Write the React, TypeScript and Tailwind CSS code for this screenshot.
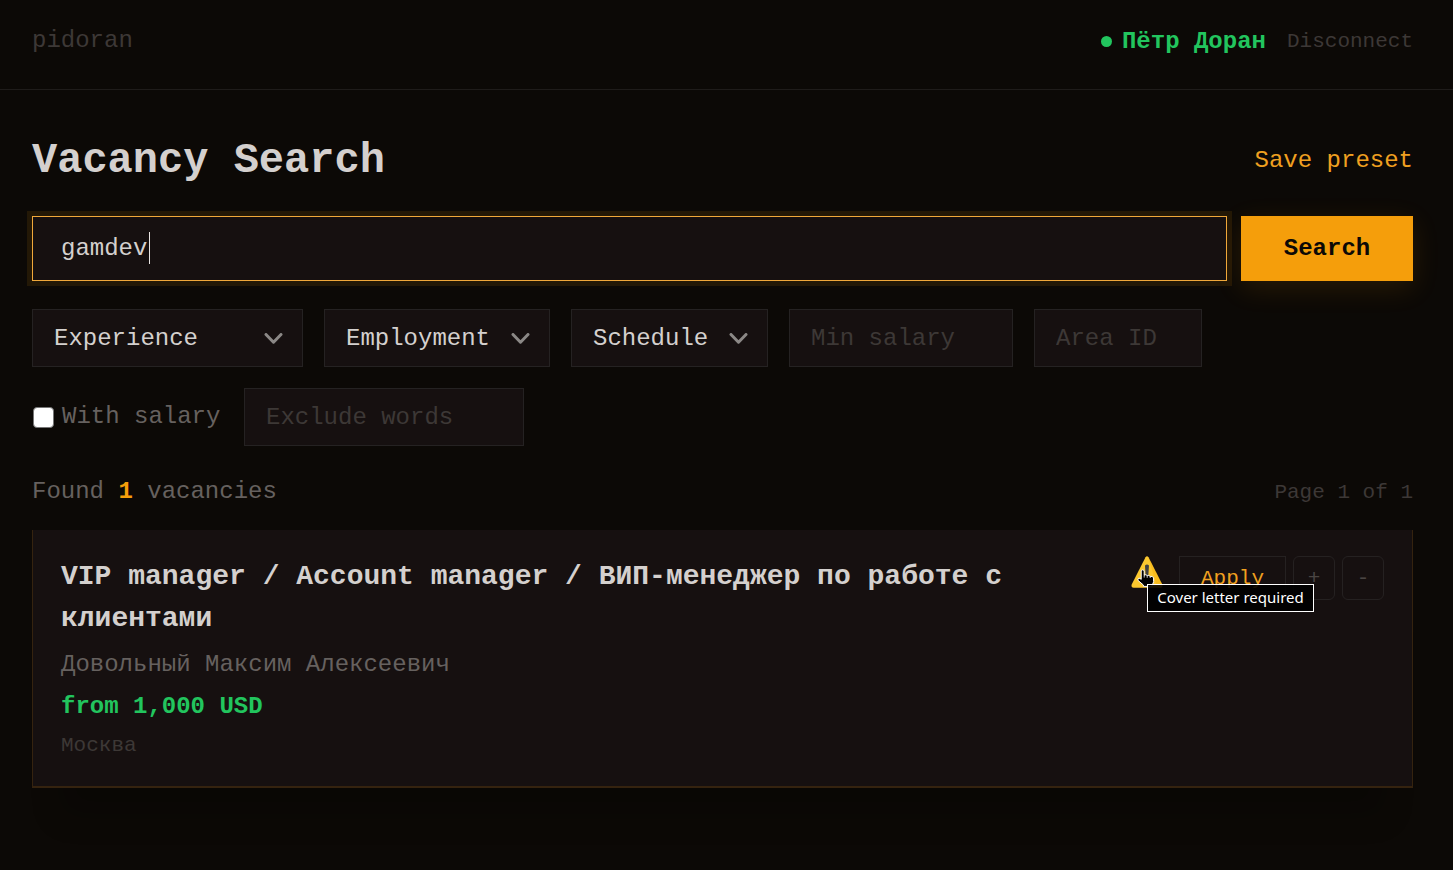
import { useState } from "react";
import type { ReactNode } from "react";

const vacancies = [
  {
    id: 1,
    title: "VIP manager / Account manager / ВИП-менеджер по работе с клиентами",
    employer: "Довольный Максим Алексеевич",
    salary: "from 1,000 USD",
    city: "Москва",
    letterRequired: true,
  },
];

const fieldClass =
  "h-[58px] border border-[#252222] bg-[#161010] px-[21px] text-2xl text-[#d4d0ce] outline-none placeholder:text-[#3d3836]";

const FilterSelect = ({ label, className }: { label: string; className: string }) => (
  <div className={`relative ${className}`}>
    <select aria-label={label} className={`${fieldClass} w-full appearance-none pt-0.5`}>
      <option>{label}</option>
    </select>
    <svg
      className="pointer-events-none absolute top-6 right-5 h-[11px] w-[19px]"
      viewBox="0 0 19 11"
      fill="none"
      stroke="#8b8886"
      strokeWidth="3"
      strokeLinecap="round"
      strokeLinejoin="round"
    >
      <path d="M2 1.5 9.5 9.2 17 1.5" />
    </svg>
  </div>
);

const WarningIcon = () => (
  <svg className="h-8 w-8" viewBox="0 0 32 32">
    <path
      d="M14.5 1.2Q16 -.8 17.5 1.2L31.3 28.6Q32.2 31.6 29.4 31.8H2.6Q-.2 31.6.7 28.6Z"
      fill="#fcc82f"
    />
    <path d="M17.5 1.2 31.3 28.6Q32.2 31.6 29.4 31.8H26Z" fill="#f2a600" opacity=".35" />
    <path d="M14 9.5Q16 7.5 18 9.5L17.3 20.5Q16 22 14.7 20.5Z" fill="#424242" />
    <circle cx="16" cy="25.8" r="2.2" fill="#424242" />
  </svg>
);

const HandCursor = () => (
  <svg className="absolute top-[13px] left-1.5 h-[18px] w-[18px]" viewBox="0 0 18 18">
    <path
      d="M4.2 1.6Q5.7 0 7.2 1.6V6.2Q9 5 10.2 6.6 12 5.8 13.2 7.4 15.8 6.8 16.6 9V12.6Q16.4 14.4 15 15.6V17.4H6.4V16Q3.8 13.8 1.2 11.6 .4 9.8 1.8 9.2 3 9 4.2 10.4Z"
      fill="#000"
      stroke="#fff"
      strokeLinejoin="round"
    />
    <path d="M7.2 6.2V8.6M10.2 6.8V8.8M13.2 7.4V9" stroke="#fff" strokeWidth=".8" fill="none" />
  </svg>
);

const RoundButton = ({ label, children }: { label: string; children: ReactNode }) => (
  <button
    aria-label={label}
    className="h-11 w-[42px] rounded-md border border-[#252121] pt-0.5 text-[21px] text-[#4a4543]"
  >
    {children}
  </button>
);

const App = () => {
  const [query, setQuery] = useState("gamdev");

  return (
    <div className="min-h-screen bg-[#0c0906] font-['Liberation_Mono',monospace] text-2xl text-[#d4d0ce]">
      <header className="flex items-baseline justify-between border-b border-[#1f1c1a] pt-[23px] pr-10 pb-[29px] pl-8 leading-9">
        <a href="#" className="text-[#3d3836]">
          pidoran
        </a>
        <div className="flex items-baseline gap-[21px]">
          <span className="flex items-center gap-[10px] font-bold text-[#22c55e]">
            <span className="h-[11px] w-[11px] rounded-full bg-[#22c55e]" />
            Пётр Доран
          </span>
          <button className="text-[21px] text-[#3d3836]">Disconnect</button>
        </div>
      </header>

      <main className="pt-[42px] pr-10 pb-20 pl-8">
        <div className="mb-[26px] flex items-center justify-between">
          <h1 className="text-[42px] leading-[58px] font-bold">Vacancy Search</h1>
          <button className="text-[#f0a020]">Save preset</button>
        </div>

        <form className="flex gap-[14px]" onSubmit={(e) => e.preventDefault()}>
          <div className="relative flex-1">
            <input
              aria-label="Search vacancies"
              value={query}
              onChange={(e) => setQuery(e.target.value)}
              className="block h-[65px] w-full border border-[#f0a83a] bg-[#161010] px-7 caret-transparent shadow-[0_0_0_5px_rgba(245,158,11,0.1)] outline-none"
            />
            <span className="pointer-events-none absolute top-4 left-[117px] h-8 w-px bg-[#e8e4e2]" />
          </div>
          <button className="h-[65px] w-[172px] bg-[#f59e0b] font-bold text-[#0c0906] shadow-[0_7px_28px_rgba(245,158,11,0.12)]">
            Search
          </button>
        </form>

        <div className="mt-7 flex flex-wrap items-center gap-[21px]">
          <FilterSelect label="Experience" className="w-[271px]" />
          <FilterSelect label="Employment" className="w-[226px]" />
          <FilterSelect label="Schedule" className="w-[197px]" />
          <input aria-label="Min salary" placeholder="Min salary" className={`${fieldClass} w-56`} />
          <input aria-label="Area ID" placeholder="Area ID" className={`${fieldClass} w-[168px]`} />
          <label className="flex w-[191px] items-center gap-2 text-[#66615f]">
            <input
              type="checkbox"
              className="ml-px h-[21px] w-[21px] appearance-none rounded-sm border border-[#767676] bg-white checked:bg-[#f59e0b]"
            />
            <span>With salary</span>
          </label>
          <input
            aria-label="Exclude words"
            placeholder="Exclude words"
            className={`${fieldClass} w-[280px]`}
          />
        </div>

        <div className="mt-7 mb-[19px] flex items-baseline justify-between leading-9">
          <p className="text-[#66615f]">
            Found <span className="font-bold text-[#f59e0b]">{vacancies.length}</span> vacancies
          </p>
          <p className="text-[21px] text-[#3d3836]">Page 1 of 1</p>
        </div>

        {vacancies.map((vacancy) => (
          <article
            key={vacancy.id}
            className="flex items-start justify-between border-x border-b-2 border-[#35230f] bg-[#161010] px-7 pt-[26px] pb-[23px] shadow-[0_56px_28px_-28px_rgba(0,0,0,0.2)]"
          >
            <div className="max-w-[960px]">
              <h2 className="text-[28px] leading-[42px] font-bold">{vacancy.title}</h2>
              <p className="mt-1 leading-[42px] text-[#66615f]">{vacancy.employer}</p>
              <p className="leading-[42px] font-bold text-[#22c55e]">{vacancy.salary}</p>
              <p className="text-[21px] leading-[35px] text-[#3d3836]">{vacancy.city}</p>
            </div>
            <div className="flex gap-[7px]">
              {vacancy.letterRequired && (
                <div className="relative mr-[9px]">
                  <WarningIcon />
                  <HandCursor />
                  <span
                    role="tooltip"
                    className="absolute top-7 left-4 z-10 h-7 w-[167px] border border-white bg-black/90 text-center font-['Noto_Sans',sans-serif] text-[15px] leading-6 whitespace-nowrap text-white"
                  >
                    Cover letter required
                  </span>
                </div>
              )}
              <button className="h-11 w-[107px] border border-[#252121] pt-0.5 text-[21px] text-[#f0a020]">
                Apply
              </button>
              <RoundButton label="Add to favourites">+</RoundButton>
              <RoundButton label="Hide vacancy">-</RoundButton>
            </div>
          </article>
        ))}
      </main>
    </div>
  );
};

export default App;
